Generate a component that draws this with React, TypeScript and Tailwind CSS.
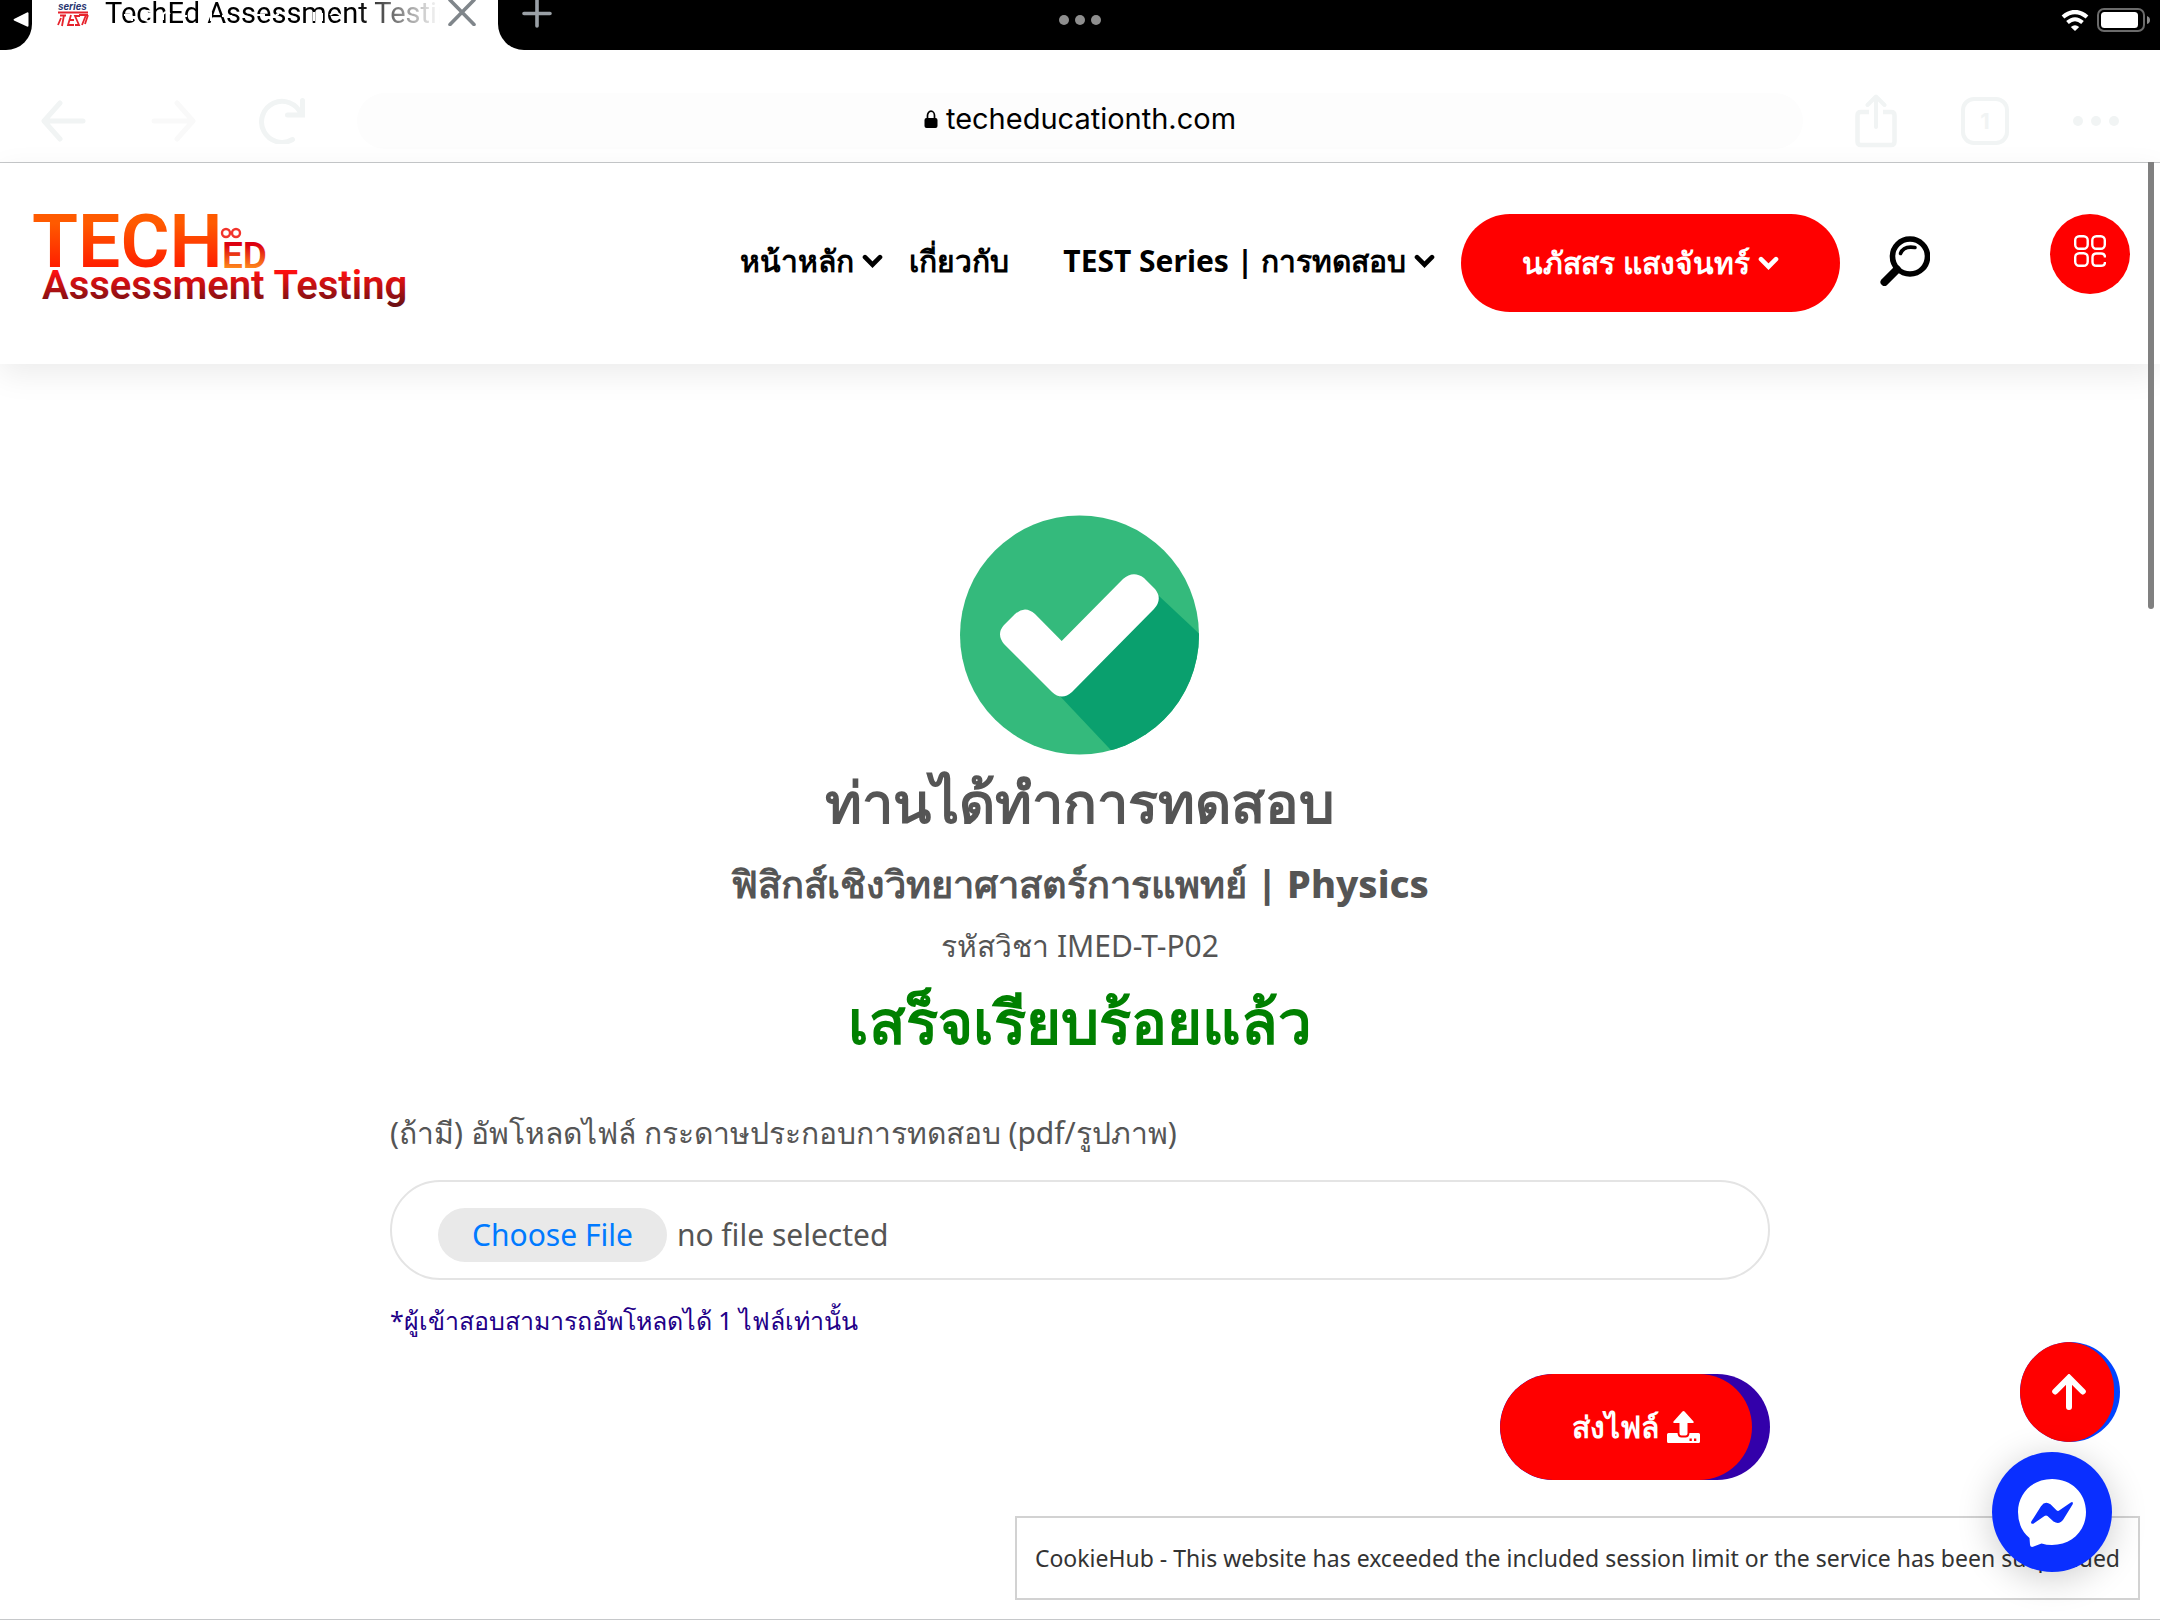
import { useState } from 'react';

interface NavLinkProps {
  label: string;
  hasMenu?: boolean;
  className?: string;
}

const ChevronDown: React.FC = () => (
  <svg viewBox="0 0 21 14" className="h-3.5 w-[21px] shrink-0" fill="none">
    <path
      d="M3 3.2 10.5 10.7 18 3.2"
      stroke="currentColor"
      strokeWidth="4.6"
      strokeLinecap="round"
    />
  </svg>
);

const NavLink: React.FC<NavLinkProps> = ({ label, hasMenu, className }) => (
  <a
    href="#"
    className={`flex items-center gap-2 whitespace-nowrap text-[30px] leading-10 font-bold text-black ${className ?? ''}`}
  >
    {label}
    {hasMenu && <ChevronDown />}
  </a>
);

const TabStrip: React.FC = () => (
  <div className="relative flex h-[50px] bg-white">
    <div className="flex w-8 justify-end rounded-br-[26px] bg-black pt-3 pr-[3px]">
      <svg viewBox="0 0 16 16" className="h-4 w-4" fill="#fff">
        <path d="M1 7 14 .4Q15.500 0 15.500 1.500V13.500Q15.500 15 14 14.600L1 8.500Q0 7.700 1 7Z" />
      </svg>
    </div>

    <div className="flex h-[26px] w-[466px] items-start pl-[25px]">
      <svg viewBox="0 0 32 28" className="h-7 w-8 shrink-0">
        <text
          x="1"
          y="10"
          fontSize="10"
          fontStyle="italic"
          fontWeight="bold"
          fontFamily="Liberation Sans, sans-serif"
          fill="#26336e"
        >
          series
        </text>
        <path
          d="M1 12.500H31M3 15.500H9M7 15 5 26M1 25 4 18M14 15 11 25H17M12 20H17M23 16H18L22 25H18M29 15 25 25M22 15H31M31 15 28 24"
          stroke="#e6232c"
          strokeWidth="1.800"
          fill="none"
        />
      </svg>
      <div className="relative ml-4 flex-1 overflow-hidden">
        <p className="whitespace-nowrap bg-linear-to-r from-black from-75% to-transparent bg-clip-text font-['Roboto',sans-serif] text-[29px] leading-[26px] text-transparent">
          TechEd Assessment Testing
        </p>
        {/* status bar glyphs bleed through the title */}
        <svg
          viewBox="0 0 320 26"
          className="absolute top-0 left-0 h-[26px] w-80"
          fill="none"
          stroke="#fff"
          strokeWidth="2"
        >
          <path d="M19 15H27M21 12Q27 10 27 18V21M46 12A5 5 0 1 0 46 20M58 20V14Q62 10 65 14M73 16H82M106 12V21M117 16H127M136 13Q131 14 137 17M151 15H160M174 14Q168 15 175 19M209 12V21M217 13V21M225 15Q231 10 236 16M246 20V14" />
        </svg>
      </div>
      <button type="button" aria-label="Close tab" className="mr-[22px] ml-2">
        <svg viewBox="0 0 28 26" className="h-[26px] w-7" fill="none">
          <path
            d="M2 0 26 24.500M26 0 2 24.500"
            stroke="#80868b"
            strokeWidth="3.600"
            strokeLinecap="round"
          />
        </svg>
      </button>
    </div>

    <div className="flex flex-1 items-start justify-between rounded-bl-[26px] bg-black pl-6">
      <button type="button" aria-label="New tab">
        <svg viewBox="0 0 30 28" className="h-7 w-[30px]" fill="none">
          <path
            d="M2 13.500H28M15 0V26"
            stroke="#9aa0a6"
            strokeWidth="3.600"
            strokeLinecap="round"
          />
        </svg>
      </button>
      <div className="mt-2 mr-2.5 flex items-center gap-2">
        <svg viewBox="0 0 28 21" className="h-[21px] w-7" fill="none">
          <path
            d="M2 7Q14-3 26 7"
            stroke="#fff"
            strokeWidth="4.200"
          />
          <path
            d="M6.500 12.500Q14 6 21.500 12.500"
            stroke="#fff"
            strokeWidth="4"
          />
          <path d="M14 21 9.800 17Q14 13.400 18.200 17Z" fill="#fff" />
        </svg>
        <svg viewBox="0 0 53 24" className="h-6 w-[53px]" fill="none">
          <rect
            x="1"
            y="1"
            width="46"
            height="22"
            rx="6"
            stroke="#6b6b6b"
            strokeWidth="2"
          />
          <rect x="4" y="4" width="37" height="16" rx="3.500" fill="#fff" />
          <path d="M50 8Q53 9 53 12T50 16Z" fill="#8b8b8b" />
        </svg>
      </div>
    </div>

    {/* multitasking dots */}
    <div className="absolute top-[15px] left-1/2 flex -translate-x-1/2 gap-1.5">
      <span className="size-2.5 rounded-full bg-[#8e8e8e]" />
      <span className="size-2.5 rounded-full bg-[#8e8e8e]" />
      <span className="size-2.5 rounded-full bg-[#8e8e8e]" />
    </div>
  </div>
);

const BrowserBar: React.FC = () => (
  <div className="flex h-[113px] items-center border-b border-[#c6c8ca] bg-white pt-[30px] pr-[41px] pl-[41px] text-[#f1f4f4]">
    <button type="button" aria-label="Back">
      <svg viewBox="0 0 46 46" className="size-[46px]" fill="none">
        <path
          d="M42 23H4M19 5 3 23 19 41"
          stroke="currentColor"
          strokeWidth="5"
          strokeLinecap="round"
          strokeLinejoin="round"
        />
      </svg>
    </button>
    <button
      type="button"
      aria-label="Forward"
      className="ml-[63px] text-[#f9f9f9]"
    >
      <svg viewBox="0 0 46 46" className="size-[46px]" fill="none">
        <path
          d="M4 23H42M27 5 43 23 27 41"
          stroke="currentColor"
          strokeWidth="5"
          strokeLinecap="round"
          strokeLinejoin="round"
        />
      </svg>
    </button>
    <button type="button" aria-label="Reload" className="ml-[63px]">
      <svg viewBox="0 0 46 46" className="size-[46px]" fill="none">
        <path
          d="M33.500 41.500A20.500 20.500 0 1 1 42 16M43.500 2.500V17H28.500"
          stroke="currentColor"
          strokeWidth="5"
          strokeLinecap="round"
        />
      </svg>
    </button>

    <div className="mx-[52px] flex h-14 flex-1 items-center justify-center gap-2 rounded-full bg-[#fdfdfd] pb-1 text-black">
      <svg viewBox="0 0 14 18" className="h-[18px] w-3.5" fill="none">
        <path d="M3.500 9V5.500a3.500 4.300 0 0 1 7 0V9" stroke="#000" strokeWidth="1.700" />
        <rect x=".5" y="8" width="13" height="10" rx="2" fill="#000" />
      </svg>
      <span className="font-['Inter',sans-serif] text-[29px] leading-10">
        techeducationth.com
      </span>
    </div>

    <button type="button" aria-label="Share">
      <svg viewBox="0 0 42 54" className="h-[54px] w-[42px]" fill="none">
        <path
          d="M14 18H6Q2.500 18 2.500 21.500V47.500Q2.500 51 6 51H36Q39.500 51 39.500 47.500V21.500Q39.500 18 36 18H28"
          stroke="currentColor"
          strokeWidth="4.500"
        />
        <path
          d="M21 33V3M12.500 11 21 2.500 29.500 11"
          stroke="currentColor"
          strokeWidth="4"
          strokeLinecap="round"
          strokeLinejoin="round"
        />
      </svg>
    </button>
    <button
      type="button"
      className="ml-16 flex size-12 items-center justify-center rounded-[13px] border-4 border-[#f1f4f4] font-['Inter',sans-serif] text-[22px] leading-6 font-bold"
    >
      1
    </button>
    <button type="button" aria-label="Menu" className="ml-16 flex gap-2">
      <span className="size-2.5 rounded-full bg-[#f1f4f4]" />
      <span className="size-2.5 rounded-full bg-[#f1f4f4]" />
      <span className="size-2.5 rounded-full bg-[#f1f4f4]" />
    </button>
  </div>
);

const Logo: React.FC = () => (
  <a href="#" aria-label="TechEd Assessment Testing" className="shrink-0">
    <svg viewBox="0 0 390 112" className="h-28 w-[390px]">
      <defs>
        <linearGradient id="tech" x1="0" y1="0" x2="0" y2="1">
          <stop offset=".3" stopColor="#ff5a00" />
          <stop offset=".8" stopColor="#ff1e00" />
        </linearGradient>
        <linearGradient id="ed" x1="0" y1="0" x2="0" y2="1">
          <stop offset=".25" stopColor="#dc0010" />
          <stop offset=".8" stopColor="#ff8a1c" />
        </linearGradient>
        <linearGradient id="line" x1="0" y1="0" x2="0" y2="1">
          <stop offset=".2" stopColor="#ff1010" />
          <stop offset=".9" stopColor="#6e1014" />
        </linearGradient>
      </defs>
      <g fontFamily="'Roboto', sans-serif">
        <text x="0" y="65" fontSize="75" fontWeight="600" fill="url(#tech)">
          TECH
        </text>
        <text x="190" y="66" fontSize="37" fontWeight="600" fill="url(#ed)">
          ED
        </text>
        <text x="10" y="97" fontSize="40" fontWeight="600" fill="url(#line)">
          Assessment Testing
        </text>
      </g>
      <g fill="none" stroke="#f2342c" strokeWidth="2.400">
        <circle cx="194" cy="31" r="4" />
        <circle cx="204" cy="31" r="4" />
      </g>
    </svg>
  </a>
);

const SiteHeader: React.FC = () => (
  <header className="flex h-[201px] items-start bg-white pt-[51px] pr-[30px] pl-8 shadow-[0_10px_30px_rgba(0,0,0,0.08)]">
    <div className="-mt-3 flex h-28 items-center">
      <Logo />
    </div>
    <nav className="ml-auto flex h-[98px] items-center">
      <div className="flex pb-1">
        <NavLink label="หน้าหลัก" hasMenu />
        <NavLink label="เกี่ยวกับ" className="ml-[26px]" />
        <NavLink
          label="TEST Series | การทดสอบ"
          hasMenu
          className="ml-[54px]"
        />
      </div>
      <button
        type="button"
        className="ml-[26px] flex h-[98px] w-[379px] items-center justify-center gap-2 whitespace-nowrap rounded-full bg-[#ff0000] text-[30px] leading-10 font-semibold text-white"
      >
        นภัสสร แสงจันทร์
        <ChevronDown />
      </button>
      <button type="button" aria-label="Search" className="ml-10 pb-1">
        <svg viewBox="0 0 50 50" className="size-[50px]" fill="none">
          <circle cx="30" cy="20.500" r="17.500" stroke="#000" strokeWidth="5.600" />
          <path
            d="M20.500 17.500Q23.500 9.500 35 11.500"
            stroke="#000"
            strokeWidth="3.600"
            strokeLinecap="round"
          />
          <path
            d="M17 33.500 4.500 46"
            stroke="#000"
            strokeWidth="8"
            strokeLinecap="round"
          />
        </svg>
      </button>
    </nav>
    <button
      type="button"
      aria-label="Open panel"
      className="ml-[120px] flex size-20 items-start justify-center rounded-full bg-[#ff0000] pt-[21px]"
    >
      <svg viewBox="0 0 32 32" className="size-8" fill="none">
        <g stroke="#fff" strokeWidth="2.400">
          <rect x="1.200" y="1.200" width="12.500" height="12.500" rx="4" />
          <rect x="18.300" y="1.200" width="12.500" height="12.500" rx="4" />
          <rect x="1.200" y="18.300" width="12.500" height="12.500" rx="4" />
          <path d="M31 22.500Q31 18.500 27 18.500H22.500Q18.500 18.500 18.500 22.500V27Q18.500 30.800 22.500 30.800H27Q31 30.800 31 27" />
        </g>
      </svg>
    </button>
  </header>
);

const CheckBadge: React.FC = () => (
  <svg viewBox="0 0 240 240" className="size-60">
    <clipPath id="disc">
      <circle cx="119.500" cy="120" r="119.500" />
    </clipPath>
    <circle cx="119.500" cy="120" r="119.500" fill="#34ba7c" />
    <path
      d="M98 179 199 81 260 138V250H165Z"
      fill="#0aa06e"
      clipPath="url(#disc)"
    />
    <path
      d="M101.700 126 75 99Q65 90 55 99L44 110Q36 119 44 129L92 177Q101.700 186 112 177L194 94Q203 84 195 74L184 63Q173.300 55 163 64Z"
      fill="#fff"
    />
  </svg>
);

const UploadForm: React.FC = () => {
  const [fileName, setFileName] = useState('no file selected');

  return (
    <form
      className="mt-[51px] w-full max-w-[1380px]"
      onSubmit={(e) => e.preventDefault()}
    >
      <label
        htmlFor="paper"
        className="block text-[30px] leading-[50px] text-[#555555]"
      >
        (ถ้ามี) อัพโหลดไฟล์ กระดาษประกอบการทดสอบ (pdf/รูปภาพ)
      </label>
      <input
        id="paper"
        type="file"
        className="sr-only"
        onChange={(e) =>
          setFileName(e.target.files?.[0]?.name ?? 'no file selected')
        }
      />
      <label
        htmlFor="paper"
        className="mt-[22px] flex h-[100px] items-center gap-2.5 rounded-full border-2 border-[#e4e4e4] bg-white pt-2.5 pl-[46px] text-[30px] leading-[54px] text-[#555555]"
      >
        <span className="rounded-full bg-[#e9e9e9] px-[34px] text-[#007aff]">
          Choose File
        </span>
        {fileName}
      </label>
      <p className="mt-5 text-[25px] leading-10 text-[#220088]">
        *ผู้เข้าสอบสามารถอัพโหลดได้ 1 ไฟล์เท่านั้น
      </p>
      <div className="mt-[34px] flex justify-end">
        <button
          type="submit"
          className="flex h-[106px] w-[270px] overflow-hidden rounded-full bg-[#3300aa]"
        >
          <span className="flex h-full w-[252px] items-center justify-center gap-2 rounded-full bg-[#ff0000] pl-5 text-[30px] leading-10 font-bold whitespace-nowrap text-white">
            ส่งไฟล์
            <svg viewBox="0 0 33 32" className="h-8 w-[33px]" fill="#fff">
              <path d="M15.200.8Q16.500-.6 17.800.8L26.500 10.500Q27.500 12 25.500 12H20.500V22.500Q20.500 24.500 18.500 24.500H14.500Q12.500 24.500 12.500 22.500V12H7.500Q5.500 12 6.500 10.500Z" />
              <path
                fillRule="evenodd"
                d="M1.500 22H10.500Q10.800 26.500 14.500 26.500H18.500Q22.200 26.500 22.500 22H31.500Q33 22 33 23.500V30.500Q33 32 31.500 32H1.500Q0 32 0 30.500V23.500Q0 22 1.500 22ZM22.500 27.500V30H24.800V27.500ZM27 27.500V30H29.300V27.500Z"
              />
            </svg>
          </span>
        </button>
      </div>
    </form>
  );
};

const FloatingWidgets: React.FC = () => (
  <>
    <div className="absolute right-5 bottom-[19px] border-2 border-[#d2d2d2] bg-white px-[18px] py-5 text-[23px] leading-10 whitespace-nowrap text-[#333333]">
      CookieHub - This website has exceeded the included session limit or the
      service has been suspended
    </div>
    <button
      type="button"
      aria-label="Back to top"
      className="absolute right-10 bottom-[177px] flex size-[100px] overflow-hidden rounded-full bg-[#0044ff]"
    >
      <span className="flex h-full w-[94px] items-center justify-center rounded-full bg-[#ff0000] pl-1">
        <svg viewBox="0 0 34 36" className="h-9 w-[34px]" fill="none">
          <path
            d="M17 33V5M3.200 17.500 17 3.700 30.800 17.500"
            stroke="#fff"
            strokeWidth="6"
            strokeLinecap="round"
          />
        </svg>
      </span>
    </button>
    <button
      type="button"
      aria-label="Messenger"
      className="absolute right-12 bottom-[47px] size-[120px] rounded-full bg-[#0a2fff] shadow-[0_6px_36px_rgba(0,0,0,0.2)]"
    >
      <svg viewBox="0 0 120 120" className="size-[120px]">
        <path
          d="M60 27C79.500 27 94 41 94 60S79.500 93 60 93Q54.500 93 49.500 91.500L41 94.800Q38 95.500 38 92.500L37.500 86Q26 76.500 26 60C26 41 40.500 27 60 27Z"
          fill="#fff"
        />
        <path
          d="M39.300 69.500 49 54.200Q53 48.500 58.500 52.300L64.500 58.300Q66 59.500 67.500 58.300L78.800 50.400Q81.500 49.300 80.700 52.300L71.300 67.500Q67.300 73.200 61.500 69.500L55.500 64Q54 62.800 52.500 64L41.300 71.700Q38.300 72.300 39.300 69.500Z"
          fill="#0a2fff"
        />
      </svg>
    </button>
    {/* scrollbar thumb */}
    <div className="absolute top-[162px] right-1.5 h-[447px] w-1.5 rounded-b-full bg-[#808080]" />
  </>
);

const App: React.FC = () => {
  return (
    <div className="relative flex min-h-screen flex-col overflow-hidden border-b border-[#c6c8ca] bg-white font-['Noto_Sans',sans-serif]">
      <TabStrip />
      <BrowserBar />
      <SiteHeader />
      <main className="flex flex-1 flex-col items-center px-10 pt-[151px] text-[#555555]">
        <CheckBadge />
        <h1 className="mt-2.5 text-[56px] leading-[72px] font-extrabold">
          ท่านได้ทำการทดสอบ
        </h1>
        <h2 className="mt-5 text-[38px] leading-[52px] font-extrabold">
          ฟิสิกส์เชิงวิทยาศาสตร์การแพทย์ | Physics
        </h2>
        <p className="mt-3 text-[30px] leading-[50px]">รหัสวิชา IMED-T-P02</p>
        <p className="mt-3.5 text-[60px] leading-[72px] font-extrabold text-[#008000]">
          เสร็จเรียบร้อยแล้ว
        </p>
        <UploadForm />
      </main>
      <FloatingWidgets />
    </div>
  );
};

export default App;
